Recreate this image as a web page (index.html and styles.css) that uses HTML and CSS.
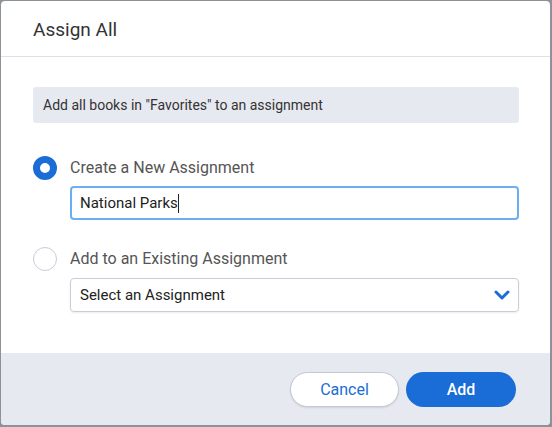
FILE: index.html
```html
<!DOCTYPE html>
<html>
<head>
<meta charset="utf-8">
<link rel="stylesheet" href="styles.css">
</head>
<body>
<div class="dialog">
  <div class="header"><h1 class="title">Assign All</h1></div>
  <div class="content">
    <div class="info">Add all books in "Favorites" to an assignment</div>
    <div class="option first">
      <span class="radio checked"></span>
      <span class="label">Create a New Assignment</span>
    </div>
    <div class="field input"><span class="value">National Parks</span><span class="caret"></span></div>
    <div class="option second">
      <span class="radio"></span>
      <span class="label">Add to an Existing Assignment</span>
    </div>
    <div class="field select">
      <span class="value">Select an Assignment</span>
      <svg class="chev" width="16" height="10" viewBox="0 0 16 10"><path d="M2 2 L8 8 L14 2" fill="none" stroke="#1a6dd6" stroke-width="3" stroke-linecap="round" stroke-linejoin="round"/></svg>
    </div>
  </div>
  <div class="footer">
    <button class="btn cancel">Cancel</button>
    <button class="btn add">Add</button>
  </div>
</div>
</body>
</html>
```
FILE: styles.css
```css
html, body { margin: 0; padding: 0; }
body {
  background: #8d9298;
  width: 552px;
  height: 427px;
  font-family: Roboto, "Liberation Sans", sans-serif;
  overflow: hidden;
}
.dialog {
  margin: 1px;
  width: 549px;
  height: 424px;
  background: #fff;
  border-radius: 4px;
  overflow: hidden;
  display: flex;
  flex-direction: column;
}
.header {
  height: 55px;
  border-bottom: 1px solid #dde0e7;
  padding-left: 32px;
  display: flex;
  align-items: center;
}
.title {
  margin: 0;
  font-size: 19px;
  font-weight: 400;
  color: #333;
  padding-top: 1px;
}
.content {
  flex: 1;
  padding: 30px 31px 0 32px;
}
.info {
  height: 36px;
  line-height: 36px;
  background: #e7e9f0;
  border-radius: 3px;
  padding: 0 10px;
  font-size: 14px;
  color: #333;
}
.option {
  display: flex;
  align-items: center;
  height: 24px;
}
.option.first { margin-top: 33px; }
.option.second { margin-top: 27px; }
.radio {
  width: 24px;
  height: 24px;
  box-sizing: border-box;
  border-radius: 50%;
  border: 1.5px solid #c6cbd8;
  margin-right: 13px;
  flex: none;
}
.radio.checked {
  border: 7px solid #1a6dd6;
  background: #fff;
}
.label {
  font-size: 16px;
  color: #555;
  padding-bottom: 2px;
}
.field {
  margin-left: 37px;
  height: 34px;
  box-sizing: border-box;
  border-radius: 4px;
  display: flex;
  align-items: center;
  padding: 0 10px 0 9px;
  font-size: 15px;
  color: #222;
}
.input {
  margin-top: 6px;
  border: 2px solid #6caef2;
  padding-left: 8px;
}
.caret {
  width: 1px;
  height: 19px;
  background: #222;
}
.select {
  margin-top: 7px;
  border: 1px solid #c9cdd7;
  box-shadow: 0 1px 2px rgba(0,0,0,0.08);
  justify-content: space-between;
  font-size: 15px;
}
.chev { margin-right: -2px; }
.footer {
  height: 72px;
  background: #e7e9f0;
  display: flex;
  justify-content: flex-end;
  align-items: flex-start;
  padding: 19px 34px 0 0;
  box-sizing: border-box;
  gap: 7px;
}
.btn {
  height: 35px;
  border-radius: 18px;
  font-family: Roboto, "Liberation Sans", sans-serif;
  font-size: 16px;
  cursor: pointer;
}
.cancel {
  width: 109px;
  background: #fff;
  border: 1px solid #c3c8d4;
  color: #1a6dd6;
  box-shadow: 0 1px 2px rgba(0,0,0,0.1);
}
.add {
  width: 110px;
  background: #1a6dd6;
  border: none;
  color: #fff;
  font-weight: 500;
}
```
